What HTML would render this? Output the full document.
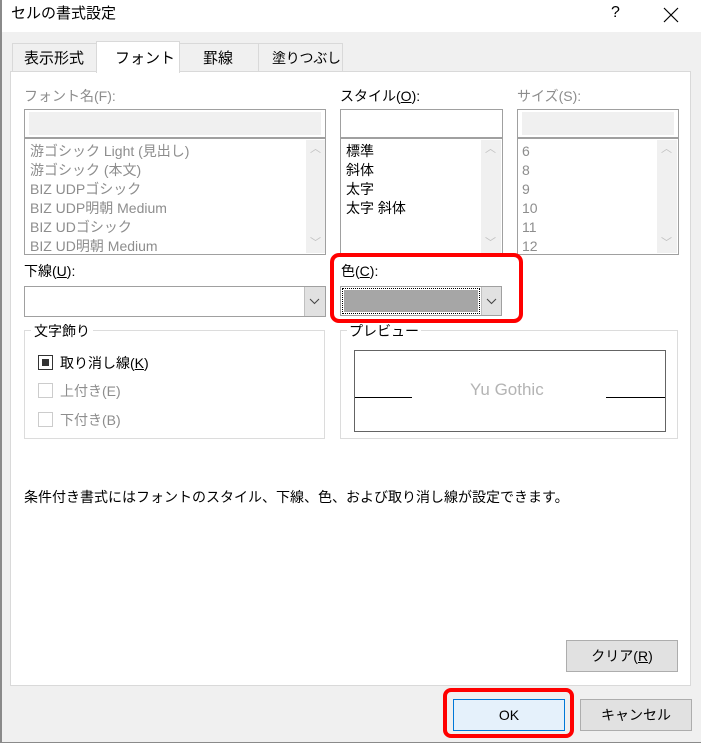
<!DOCTYPE html>
<html><head><meta charset="utf-8"><style>
*{margin:0;padding:0;box-sizing:border-box}
body{width:701px;height:745px;background:#f0f0f0;position:relative;overflow:hidden;font-family:"Liberation Sans","Noto Sans CJK JP",sans-serif;font-size:14px;color:#000}
.a{position:absolute;white-space:nowrap;line-height:1}
.g{color:#8d8d8d}
.box{position:absolute;border:1px solid #a0a0a0;background:#fff}
.sb{position:absolute;background:#f0f0f0}
.btn{position:absolute;background:#e1e1e1;border:1px solid #adadad;text-align:center;font-size:14px}
u{text-decoration:underline}
</style></head><body>
<div class="a" style="left:0;top:0;width:701px;height:32px;background:#fff"></div>
<div class="a" style="left:0;top:0;width:2px;height:742px;background:#8a8a8a"></div>
<div class="a" style="left:11px;top:6px;font-size:15px">セルの書式設定</div>
<div class="a" style="left:611px;top:5px;font-size:16px">?</div>
<svg class="a" style="left:663px;top:7px" width="16" height="16"><path d="M1 1L15 15M15 1L1 15" stroke="#000" stroke-width="1.2"/></svg>

<!-- tabs -->
<div class="a" style="left:12px;top:43px;width:85px;height:29px;border:1px solid #d9d9d9;background:#f0f0f0"></div>
<div class="a" style="left:179px;top:43px;width:80px;height:29px;border:1px solid #d9d9d9;background:#f0f0f0"></div>
<div class="a" style="left:258px;top:43px;width:85px;height:29px;border:1px solid #d9d9d9;background:#f0f0f0"></div>
<div class="a" style="left:24px;top:51px;font-size:15px">表示形式</div>
<div class="a" style="left:203px;top:51px;font-size:15px">罫線</div>
<div class="a" style="left:272px;top:51px;font-size:14px;letter-spacing:-0.3px">塗りつぶし</div>
<div class="a" style="left:10px;top:71px;width:681px;height:615px;border:1px solid #d9d9d9;background:#fff"></div>
<div class="a" style="left:96px;top:41px;width:84px;height:32px;border:1px solid #d9d9d9;border-bottom:none;background:#fff"></div>
<div class="a" style="left:115px;top:51px;font-size:15px">フォント</div>

<!-- font name -->
<div class="a g" style="left:24px;top:89px">フォント名(F):</div>
<div class="box" style="left:24px;top:109px;width:302px;height:29px"></div>
<div class="sb" style="left:29px;top:112px;width:292px;height:23px"></div>
<div class="box" style="left:24px;top:138px;width:302px;height:117px"></div>
<div class="sb" style="left:306px;top:140px;width:19px;height:113px"></div>
<div class="a" style="left:310px;top:144px;color:#c0c0c0;font-size:11px">︿</div>
<div class="a" style="left:310px;top:238px;color:#c0c0c0;font-size:11px">﹀</div>
<div class="a g" style="left:30px;top:142px;line-height:19px">游ゴシック Light (見出し)<br>游ゴシック (本文)<br>BIZ UDPゴシック<br>BIZ UDP明朝 Medium<br>BIZ UDゴシック<br>BIZ UD明朝 Medium</div>

<!-- style -->
<div class="a" style="left:340px;top:89px">スタイル(<u>O</u>):</div>
<div class="box" style="left:340px;top:109px;width:163px;height:29px"></div>
<div class="box" style="left:340px;top:138px;width:163px;height:117px"></div>
<div class="sb" style="left:481px;top:140px;width:20px;height:113px"></div>
<div class="a" style="left:485px;top:144px;color:#c0c0c0;font-size:11px">︿</div>
<div class="a" style="left:485px;top:238px;color:#c0c0c0;font-size:11px">﹀</div>
<div class="a" style="left:346px;top:142px;line-height:19px">標準<br>斜体<br>太字<br>太字 斜体</div>

<!-- size -->
<div class="a g" style="left:517px;top:89px">サイズ(S):</div>
<div class="box" style="left:517px;top:109px;width:162px;height:29px"></div>
<div class="sb" style="left:522px;top:112px;width:152px;height:23px"></div>
<div class="box" style="left:517px;top:138px;width:162px;height:117px"></div>
<div class="sb" style="left:657px;top:140px;width:20px;height:113px"></div>
<div class="a" style="left:661px;top:144px;color:#c0c0c0;font-size:11px">︿</div>
<div class="a" style="left:661px;top:238px;color:#c0c0c0;font-size:11px">﹀</div>
<div class="a g" style="left:522px;top:142px;line-height:19px">6<br>8<br>9<br>10<br>11<br>12</div>

<!-- underline -->
<div class="a" style="left:24px;top:264px">下線(<u>U</u>):</div>
<div class="box" style="left:24px;top:286px;width:302px;height:31px"></div>
<div class="a" style="left:304px;top:287px;width:21px;height:29px;background:#e1e1e1;border-left:1px solid #c0c0c0"></div>
<svg class="a" style="left:309px;top:298px" width="11" height="7"><path d="M1 1L5.5 5.5L10 1" stroke="#444" fill="none"/></svg>

<!-- color -->
<div class="a" style="left:341px;top:264px">色(<u>C</u>):</div>
<div class="box" style="left:340px;top:286px;width:162px;height:30px"></div>
<div class="a" style="left:342px;top:288px;width:138px;height:26px;border:1px dotted #000"></div>
<div class="a" style="left:344px;top:290px;width:134px;height:22px;background:#a6a6a6"></div>
<div class="a" style="left:481px;top:287px;width:20px;height:28px;background:#e1e1e1;border-left:1px solid #c0c0c0"></div>
<svg class="a" style="left:486px;top:298px" width="11" height="7"><path d="M1 1L5.5 5.5L10 1" stroke="#444" fill="none"/></svg>
<div class="a" style="left:330px;top:253px;width:193px;height:70px;border:4px solid #f00;border-radius:9px"></div>

<!-- decoration group -->
<div class="a" style="left:24px;top:330px;width:301px;height:109px;border:1px solid #dcdcdc"></div>
<div class="a" style="left:31px;top:324px;background:#fff;padding:0 3px">文字飾り</div>
<div class="a" style="left:38px;top:355px;width:15px;height:15px;border:1px solid #333;background:#fff"></div>
<div class="a" style="left:42px;top:359px;width:7px;height:7px;background:#333"></div>
<div class="a" style="left:60px;top:356px">取り消し線(<u>K</u>)</div>
<div class="a" style="left:38px;top:383px;width:15px;height:15px;border:1px solid #ccc"></div>
<div class="a g" style="left:60px;top:384px">上付き(E)</div>
<div class="a" style="left:38px;top:412px;width:15px;height:15px;border:1px solid #ccc"></div>
<div class="a g" style="left:60px;top:413px">下付き(B)</div>

<!-- preview -->
<div class="a" style="left:340px;top:330px;width:338px;height:109px;border:1px solid #dcdcdc"></div>
<div class="a" style="left:347px;top:324px;background:#fff;padding:0 2px">プレビュー</div>
<div class="a" style="left:354px;top:350px;width:312px;height:82px;border:1px solid #646464"></div>
<div class="a" style="left:355px;top:397px;width:57px;height:1px;background:#000"></div>
<div class="a" style="left:606px;top:397px;width:59px;height:1px;background:#000"></div>
<div class="a" style="left:470px;top:381px;font-size:17px;color:#b4b4b4">Yu Gothic</div>

<div class="a" style="left:24px;top:490px">条件付き書式にはフォントのスタイル、下線、色、および取り消し線が設定できます。</div>

<div class="btn" style="left:566px;top:640px;width:112px;height:32px;line-height:30px">クリア(<u>R</u>)</div>
<div class="btn" style="left:453px;top:699px;width:112px;height:32px;line-height:30px;background:#e5f1fb;border:1px solid #0078d7">OK</div>
<div class="a" style="left:443px;top:688px;width:131px;height:50px;border:4px solid #f00;border-radius:8px"></div>
<div class="btn" style="left:580px;top:699px;width:112px;height:32px;line-height:30px">キャンセル</div>

<div class="a" style="left:0;top:742px;width:701px;height:3px;background:#fff;border-top:1px solid #8a8a8a"></div>
</body></html>
